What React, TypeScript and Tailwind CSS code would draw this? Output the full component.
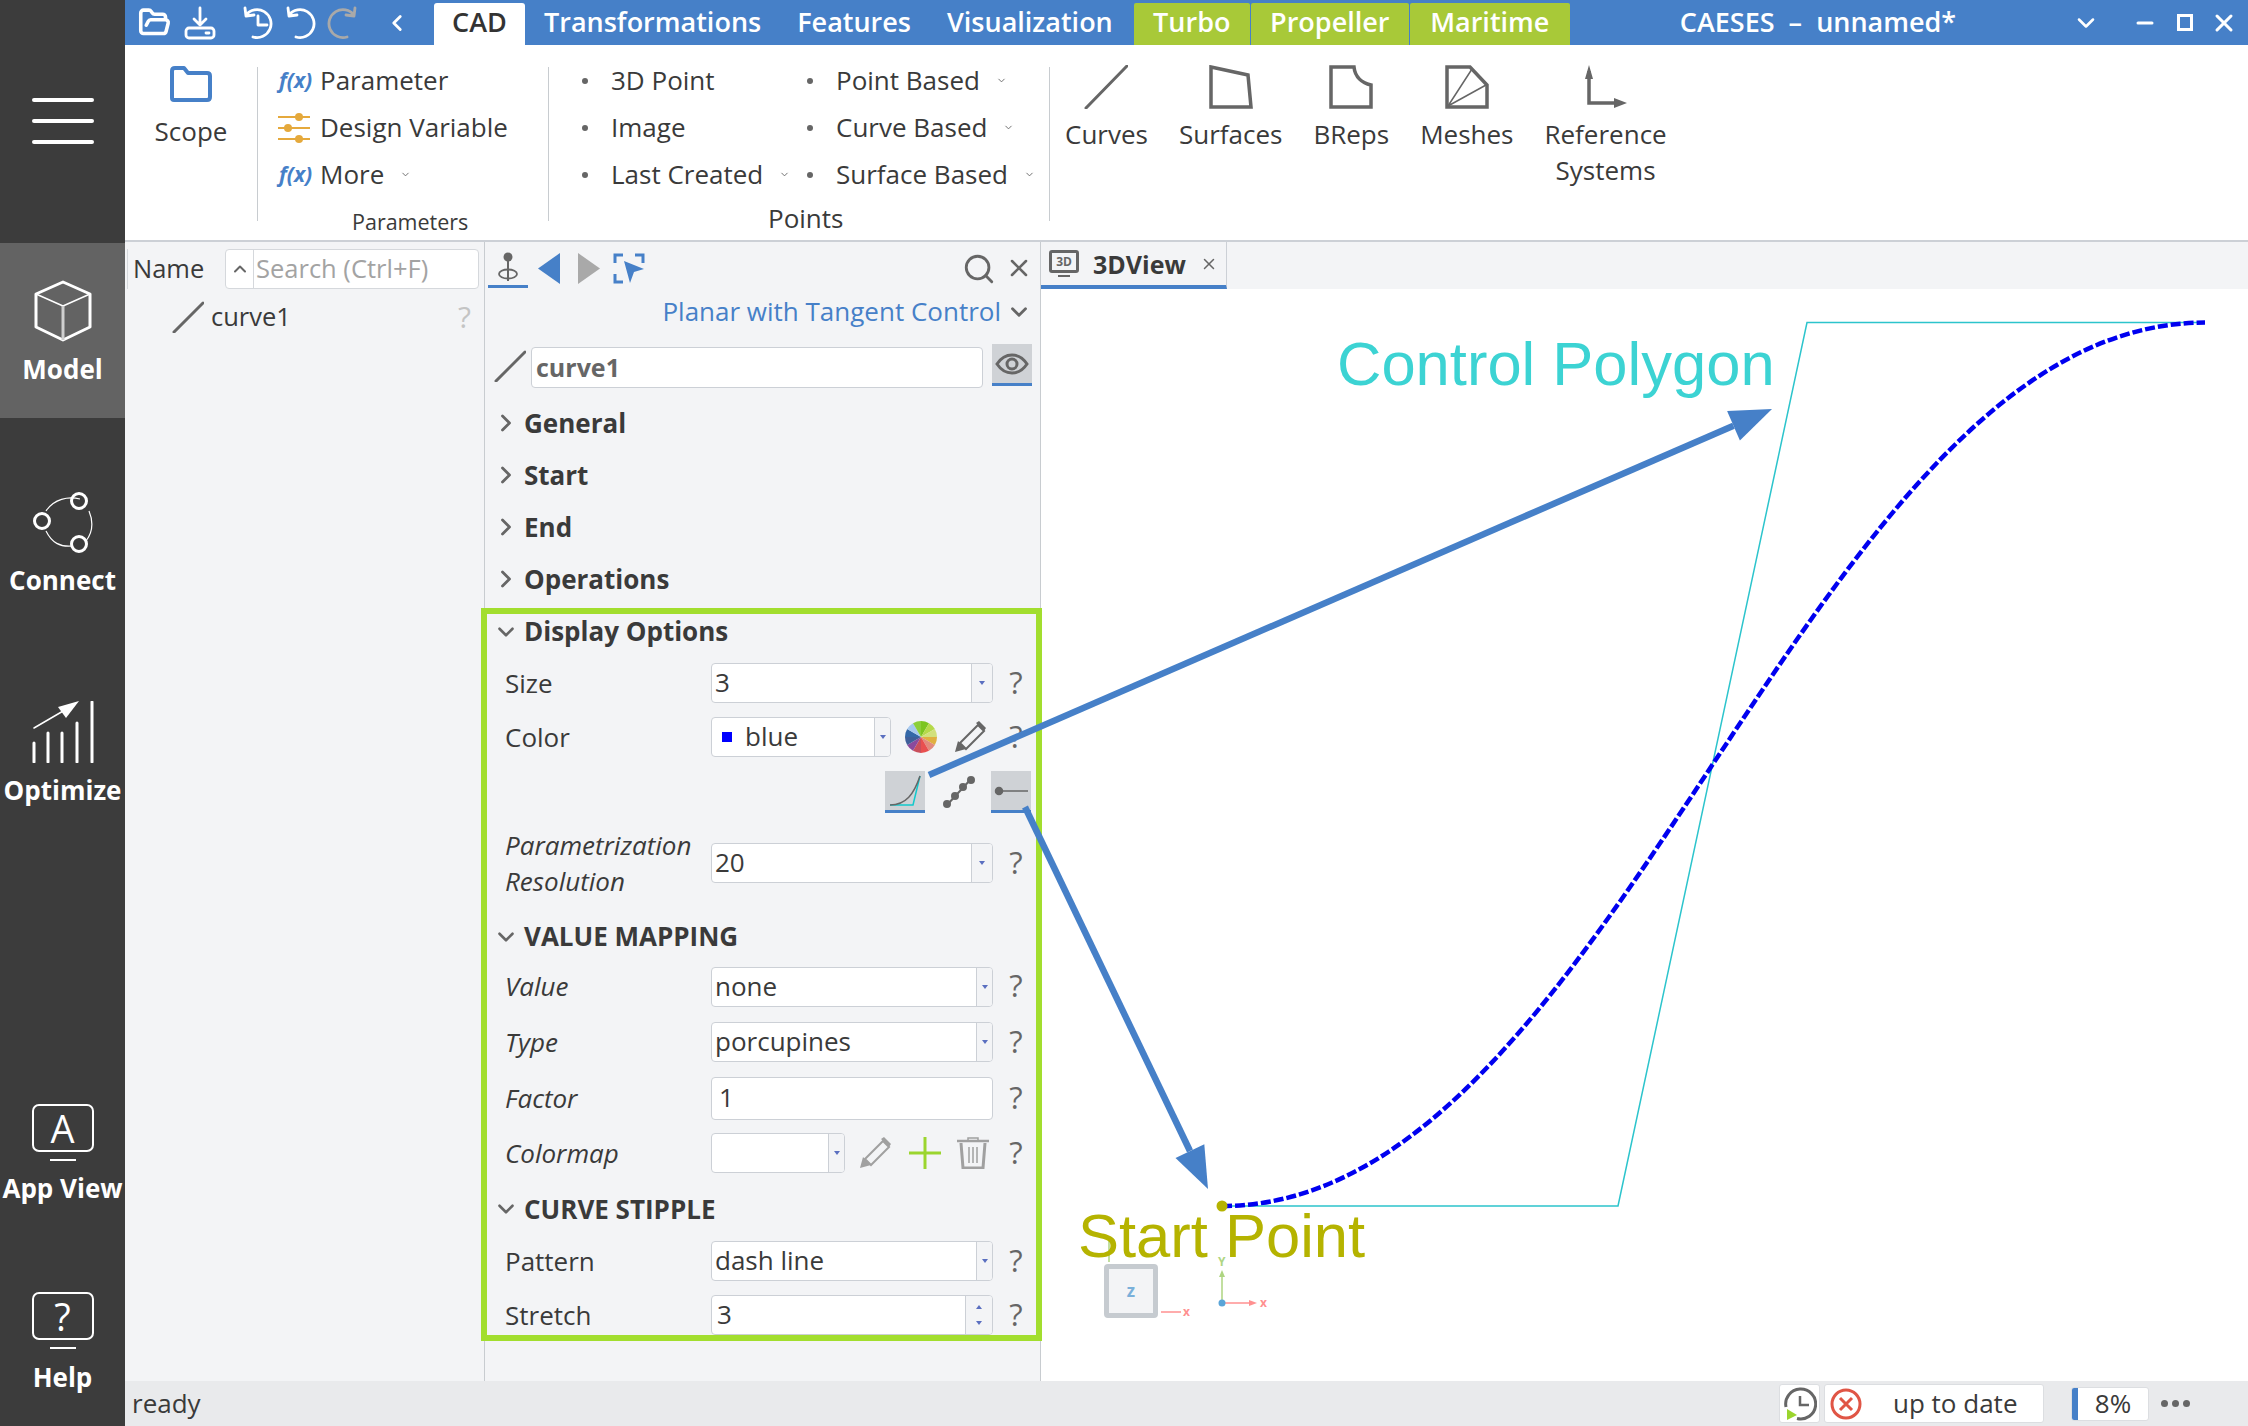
import type { ReactNode } from "react";
import { ChevronDown, ChevronRight, ChevronUp, ChevronLeft, FolderOpen, Minus, Search, X } from "lucide-react";

const BLUE = "#4680c8";
const GREY = "#666666";

function Cube() {
  return (
    <svg width="60" height="62" viewBox="0 0 60 62" fill="none" stroke="#fff" strokeWidth="3" strokeLinejoin="round">
      <path d="M30 2 57 14V47L30 60 3 47V14Z" />
      <path d="M3 14 30 26 57 14" strokeWidth="1.5" />
      <path d="M30 26V60" stroke="#cfcfcf" />
    </svg>
  );
}

function ConnectIcon() {
  return (
    <svg width="62" height="62" viewBox="0 0 62 62" fill="none" stroke="#fff">
      <path d="M14 20C22 8 36 5 48 8M57 20C62 32 60 42 54 50M40 55C28 56 20 52 14 40" strokeWidth="1.2" />
      <circle cx="47" cy="10" r="7.5" strokeWidth="3" />
      <circle cx="10" cy="30" r="7.5" strokeWidth="3" />
      <circle cx="47" cy="53" r="7.5" strokeWidth="3" />
    </svg>
  );
}

function OptimizeIcon() {
  return (
    <svg width="62" height="62" viewBox="0 0 62 62" fill="none" stroke="#fff" strokeLinecap="round">
      <path d="M2 27 38 6" strokeWidth="1.5" />
      <path d="M47 0 26 6 34 17Z" fill="#fff" stroke="none" />
      <path d="M2 42V61M16 32V61M30 32V61M45 22V61M60 1V61" strokeWidth="3" />
    </svg>
  );
}

function Monitor({ glyph }: { glyph: string }) {
  return (
    <div className="flex flex-col items-center">
      <div className="flex h-[48px] w-[62px] items-center justify-center rounded-[7px] border-[2.5px] border-white text-[38px] leading-none text-white">
        {glyph}
      </div>
      <div className="mt-[7px] h-[2px] w-[26px] bg-white" />
    </div>
  );
}

function NavItem({ icon, label, className, labelClass }: { icon: ReactNode; label: string; className: string; labelClass: string }) {
  return (
    <div className={`flex flex-col items-center ${className}`}>
      {icon}
      <span className={`text-[26px] leading-[32px] font-bold whitespace-nowrap text-white ${labelClass}`}>{label}</span>
    </div>
  );
}

function Sidebar() {
  return (
    <aside className="flex w-[125px] shrink-0 flex-col bg-[#3c3c3c]">
      <div className="flex h-[243px] flex-col items-center gap-[17px] pt-[98px]">
        <div className="h-[4px] w-[62px] rounded-sm bg-white" />
        <div className="h-[4px] w-[62px] rounded-sm bg-white" />
        <div className="h-[4px] w-[62px] rounded-sm bg-white" />
      </div>
      <NavItem icon={<Cube />} label="Model" className="h-[175px] bg-[#636363] pt-[37px]" labelClass="mt-[11px]" />
      <NavItem icon={<ConnectIcon />} label="Connect" className="pt-[73px]" labelClass="mt-[11px]" />
      <NavItem icon={<OptimizeIcon />} label="Optimize" className="pt-[105px]" labelClass="mt-[11px]" />
      <NavItem icon={<Monitor glyph="A" />} label="App View" className="pt-[298px]" labelClass="mt-[11px]" />
      <NavItem icon={<Monitor glyph="?" />} label="Help" className="pt-[88px]" labelClass="mt-[12px]" />
    </aside>
  );
}

function TitleBar() {
  return (
    <header className="flex h-[45px] shrink-0 items-end bg-[#4680c8] text-white">
      <div className="flex h-[45px] w-[309px] shrink-0 items-center gap-[13px] pl-[13px]">
        <FolderOpen size={33} strokeWidth={2.6} />
        <svg width="32" height="34" viewBox="0 0 32 34" fill="none" stroke="#fff" strokeWidth="2.8" strokeLinecap="round" strokeLinejoin="round">
          <path d="M16 2V18M10 13l6 6 6-6" />
          <rect x="2" y="22" width="28" height="10" rx="3" />
          <path d="M22 27h3" />
        </svg>
        <svg className="ml-[12px]" width="32" height="34" viewBox="0 0 32 34" fill="none" stroke="#fff" strokeWidth="2.8" strokeLinecap="round" strokeLinejoin="round">
          <path d="M5 9A14 14 0 1 1 12 31M4 2 5 10 13 9M17 10V19H26" />
        </svg>
        <svg className="ml-[-2px]" width="32" height="34" viewBox="0 0 32 34" fill="none" stroke="#fff" strokeWidth="2.8" strokeLinecap="round" strokeLinejoin="round">
          <path d="M5 9A14 14 0 1 1 12 31M4 2 5 10 13 9" />
        </svg>
        <svg className="ml-[-2px]" width="32" height="34" viewBox="0 0 32 34" fill="none" stroke="#a9a9a9" strokeWidth="2.8" strokeLinecap="round" strokeLinejoin="round">
          <path d="M27 9A14 14 0 1 0 20 31M28 2 27 10 19 9" />
        </svg>
        <ChevronLeft className="ml-[12px]" size={26} strokeWidth={2.6} />
      </div>
      <div className="flex h-[42px] w-[91px] items-center justify-center rounded-t-[3px] bg-white pb-[3px] text-[27px] font-semibold text-[#333]">CAD</div>
      <div className="w-[1px]" />
      {["Transformations", "Features", "Visualization"].map((t) => (
        <div key={t} className="flex h-[45px] items-center px-[18px] text-[27px] font-semibold whitespace-nowrap">{t}</div>
      ))}
      <div className="ml-[3px] flex gap-[1px]">
        {[["Turbo", "w-[116px]"], ["Propeller", "w-[158px]"], ["Maritime", "w-[160px]"]].map(([t, w]) => (
          <div key={t} className={`flex h-[42px] items-center justify-center rounded-t-[2px] bg-[#a8c938] pb-[3px] text-[27px] font-semibold ${w}`}>{t}</div>
        ))}
      </div>
      <div className="ml-[110px] flex h-[45px] items-center text-[27px] font-semibold whitespace-pre">CAESES  –  unnamed*</div>
      <div className="ml-auto flex h-[45px] items-center gap-[20px] pr-[10px]">
        <ChevronDown size={28} strokeWidth={2.2} />
        <Minus className="ml-[13px]" size={24} strokeWidth={3} />
        <div className="h-[17px] w-[16px] border-[3px] border-white" />
        <X className="ml-[-3px]" size={28} strokeWidth={2.6} />
      </div>
    </header>
  );
}

function Fx() {
  return <span className="w-[42px] shrink-0 pl-[1px] text-[21px] font-bold text-[#4680c8] italic">f(x)</span>;
}

function TinyChevron() {
  return <ChevronDown className="text-[#666]" size={11} strokeWidth={2} />;
}

function RibbonRow({ children, className = "" }: { children: ReactNode; className?: string }) {
  return <div className={`flex h-[47px] items-center text-[26px] whitespace-nowrap text-[#3a3a3a] ${className}`}>{children}</div>;
}

function PointRow({ label, more }: { label: string; more?: boolean }) {
  return (
    <RibbonRow>
      <span className="mr-[23px] h-[6px] w-[6px] rounded-full bg-[#666]" />
      {label}
      {more && <span className="ml-[16px]"><TinyChevron /></span>}
    </RibbonRow>
  );
}

function Separator() {
  return <div className="mt-[22px] h-[154px] w-[1px] shrink-0 bg-[#c8ccd0]" />;
}

function RibbonTool({ label, icon }: { label: ReactNode; icon: ReactNode }) {
  return (
    <div className="flex flex-col items-center text-center text-[26px] leading-[36px] whitespace-nowrap text-[#3a3a3a]">
      <div className="flex h-[44px] items-center justify-center">{icon}</div>
      <div className="mt-[7px]">{label}</div>
    </div>
  );
}

function Ribbon() {
  return (
    <section className="flex h-[197px] shrink-0 border-b-2 border-[#ccd0d6] bg-white">
      <div className="flex w-[132px] shrink-0 flex-col items-center pt-[21px]">
        <svg width="44" height="36" viewBox="0 0 44 36" fill="none" stroke={BLUE} strokeWidth="4" strokeLinejoin="round">
          <path d="M3 32V5Q3 2 6 2H15L19 7H38Q41 7 41 10V31Q41 34 38 34H5Q3 34 3 32Z" />
        </svg>
        <span className="mt-[10px] text-[26px] text-[#3a3a3a]">Scope</span>
      </div>
      <Separator />
      <div className="w-[290px] shrink-0 pt-[12px] pl-[20px]">
        <RibbonRow><Fx />Parameter</RibbonRow>
        <RibbonRow>
          <svg className="mr-[10px] shrink-0" width="32" height="32" viewBox="0 0 32 32" stroke="#e5a93c" fill="#e5a93c">
            <path d="M0 5H32M0 16H32M0 27H32" strokeWidth="2" />
            <circle cx="21" cy="5" r="4" stroke="none" />
            <circle cx="10" cy="16" r="4" stroke="none" />
            <circle cx="21" cy="27" r="4" stroke="none" />
          </svg>
          Design Variable
        </RibbonRow>
        <RibbonRow><Fx />More<span className="ml-[16px]"><TinyChevron /></span></RibbonRow>
        <div className="mt-[8px] pl-[74px] text-[21.5px] text-[#3a3a3a]">Parameters</div>
      </div>
      <Separator />
      <div className="w-[500px] shrink-0 pt-[12px] pl-[33px]">
        <div className="flex">
          <div className="w-[225px]">
            <PointRow label="3D Point" />
            <PointRow label="Image" />
            <PointRow label="Last Created" more />
          </div>
          <div>
            <PointRow label="Point Based" more />
            <PointRow label="Curve Based" more />
            <PointRow label="Surface Based" more />
          </div>
        </div>
        <div className="pl-[186px] text-[26px] leading-[40px] text-[#3a3a3a]">Points</div>
      </div>
      <Separator />
      <div className="flex items-start gap-[31px] pt-[20px] pl-[15px]">
        <RibbonTool
          label="Curves"
          icon={<svg width="44" height="44" viewBox="0 0 44 44" stroke={GREY} strokeWidth="3" strokeLinecap="round"><path d="M43 1 2 43" /></svg>}
        />
        <RibbonTool
          label="Surfaces"
          icon={<svg width="44" height="44" viewBox="0 0 44 44" fill="none" stroke={GREY} strokeWidth="3.5"><path d="M2 2 39 10 42 42H2Z" /></svg>}
        />
        <RibbonTool
          label="BReps"
          icon={<svg width="44" height="44" viewBox="0 0 44 44" fill="none" stroke={GREY} strokeWidth="3.5"><path d="M2 2H25C26 12 33 18 42 20V42H2Z" /></svg>}
        />
        <RibbonTool
          label="Meshes"
          icon={
            <svg width="44" height="44" viewBox="0 0 44 44" fill="none" stroke={GREY} strokeWidth="3.5">
              <path d="M2 2H25L42 20V42H2Z" />
              <path d="M3 41 27 4M3 41 41 20" strokeWidth="1.5" />
            </svg>
          }
        />
        <RibbonTool
          label={<>Reference<br />Systems</>}
          icon={
            <svg width="44" height="44" viewBox="0 0 44 44" fill={GREY} stroke={GREY}>
              <path d="M5 6V38H36" fill="none" strokeWidth="3.5" />
              <path d="M5 0 9 14H1ZM43 38 30 43V33Z" stroke="none" />
            </svg>
          }
        />
      </div>
    </section>
  );
}

function Tree() {
  return (
    <div className="w-[359px] shrink-0 pt-[7px] text-[25.5px] text-[#3a3a3a]">
      <div className="flex h-[40px] items-center">
        <div className="mx-[2px] h-[40px] w-[1px] bg-[#d5d8dc]" />
        <span className="ml-[3px] w-[92px] pb-[2px]">Name</span>
        <div className="flex h-[40px] w-[254px] items-center rounded-[4px] border border-[#d5d8dc] bg-white">
          <div className="flex h-full w-[28px] shrink-0 items-center justify-center border-r border-[#d5d8dc]">
            <ChevronUp size={20} strokeWidth={2.4} color={GREY} />
          </div>
          <span className="pb-[2px] pl-[2px] whitespace-nowrap text-[#a3a3a3]">Search (Ctrl+F)</span>
        </div>
      </div>
      <div className="mt-[8px] flex h-[40px] items-center pl-[47px]">
        <svg className="shrink-0" width="32" height="32" viewBox="0 0 32 32" stroke={GREY} strokeWidth="3" strokeLinecap="round"><path d="M2 31 31 2" /></svg>
        <span className="ml-[7px] pb-[2px]">curve1</span>
        <span className="ml-[167px] text-[30px] leading-none text-[#c4c4c4]">?</span>
      </div>
    </div>
  );
}

function Section({ label, open, h }: { label: string; open?: boolean; h: string }) {
  return (
    <div className={`flex items-center pl-[8px] text-[26px] font-bold text-[#3a3a3a] ${h}`}>
      {open ? <ChevronDown size={26} strokeWidth={2.4} color={GREY} /> : <ChevronRight className="ml-[-1px]" size={28} strokeWidth={2.4} color={GREY} />}
      <span className={open ? "ml-[5px]" : "ml-[4px]"}>{label}</span>
    </div>
  );
}

function Help() {
  return <span className="ml-auto w-[46px] shrink-0 pr-[2px] pb-[2px] text-center text-[31px] leading-none text-[#666]">?</span>;
}

function Caret({ up }: { up?: boolean }) {
  return <span className={`h-0 w-0 border-x-[3px] border-x-transparent ${up ? "border-b-[4px] border-b-[#5a6fc0]" : "border-t-[4px] border-t-[#5a6fc0]"}`} />;
}

function Field({ value, w, cell, spin, h = "h-[40px]" }: { value: ReactNode; w: string; cell?: string; spin?: boolean; h?: string }) {
  return (
    <div className={`flex shrink-0 items-center overflow-hidden rounded-[4px] border border-[#ccd0d6] bg-white ${w} ${h}`}>
      <div className="flex min-w-0 flex-1 items-center pb-[2px] pl-[3px] whitespace-nowrap">{value}</div>
      {cell && (
        <div className={`flex h-full shrink-0 flex-col items-center border-l border-[#ccd0d6] bg-[#f3f4f6] ${cell} ${spin ? "justify-between py-[9px]" : "justify-center"}`}>
          {spin && <Caret up />}
          <Caret />
        </div>
      )}
    </div>
  );
}

function Row({ label, italic, h, children }: { label?: ReactNode; italic?: boolean; h: string; children: ReactNode }) {
  return (
    <div className={`flex items-center text-[26px] leading-[36px] text-[#3a3a3a] ${h}`}>
      <div className={`w-[226px] shrink-0 pb-[1px] pl-[20px] ${italic ? "italic" : ""}`}>{label}</div>
      {children}
    </div>
  );
}

function ToggleBtn({ children }: { children: ReactNode }) {
  return <div className="flex h-[42px] w-[40px] shrink-0 items-center justify-center border-b-[3px] border-[#4680c8] bg-[#cfd2d6]">{children}</div>;
}

function ColorWheel() {
  const colors = ["#7cc520", "#b5d94a", "#d2e07c", "#e0b040", "#e28a7c", "#e85050", "#c94f5c", "#8a4a9c", "#3f5f9a", "#3468a8", "#a6c8ee", "#8ccf3a"];
  const wedge = (i: number) => {
    const a = ((i * 30 - 90) * Math.PI) / 180;
    const b = (((i + 1) * 30 - 90) * Math.PI) / 180;
    return `M16 16L${16 + 16 * Math.cos(a)} ${16 + 16 * Math.sin(a)}A16 16 0 0 1 ${16 + 16 * Math.cos(b)} ${16 + 16 * Math.sin(b)}Z`;
  };
  return (
    <svg width="32" height="32" viewBox="0 0 32 32">
      {colors.map((c, i) => <path key={c + i} d={wedge(i)} fill={c} />)}
    </svg>
  );
}

function PencilIcon({ color, className }: { color: string; className: string }) {
  return (
    <svg className={className} width="32" height="32" viewBox="0 0 32 32" fill="none" stroke={color} strokeWidth="2">
      <path d="M6 22 24 4 30 10 12 28Z" />
      <path d="M1 31 4 20 12 28Z" fill={color} stroke="none" />
      <path d="M22 2 25 0 32 7 30 10Z" fill={color} stroke="none" />
    </svg>
  );
}

function Properties() {
  return (
    <div className="flex w-[557px] shrink-0 flex-col border-x border-[#c8ccd0]">
      <div className="flex h-[50px] items-start pt-[7px] pl-[3px]">
        <div className="flex h-[39px] w-[40px] items-center justify-center border-b-[3px] border-[#4680c8]">
          <svg width="26" height="30" viewBox="0 0 26 30" fill="none" stroke={GREY} strokeWidth="1.8">
            <circle cx="13" cy="5" r="4.5" fill={GREY} stroke="none" />
            <path d="M13 8V29" strokeWidth="2" />
            <ellipse cx="13" cy="22" rx="9" ry="4.5" />
          </svg>
        </div>
        <svg className="mt-[4px] ml-[10px]" width="22" height="31" viewBox="0 0 22 31"><path d="M22 0V31L0 15.5Z" fill={BLUE} /></svg>
        <svg className="mt-[4px] ml-[18px]" width="22" height="31" viewBox="0 0 22 31"><path d="M0 0V31L22 15.5Z" fill="#a9a9a9" /></svg>
        <svg className="mt-[4px] ml-[13px]" width="32" height="31" viewBox="0 0 32 31" fill="none" stroke={BLUE} strokeWidth="3">
          <path d="M10 2H2V10M22 2H30V10M2 21V29H10" />
          <path d="M11 8 31 16 21 19 17 30Z" fill={BLUE} stroke="none" />
        </svg>
        <Search className="mt-[3px] ml-auto" size={34} strokeWidth={2} color={GREY} />
        <X className="mt-[5px] mr-[7px] ml-[9px]" size={28} strokeWidth={2.2} color={GREY} />
      </div>
      <div className="flex h-[40px] items-center justify-end pr-[8px] text-[26px] text-[#4680c8]">
        <span className="pb-[2px]">Planar with Tangent Control</span>
        <ChevronDown className="ml-[5px]" size={26} strokeWidth={2.6} color={GREY} />
      </div>
      <div className="flex h-[65px] items-start pt-[12px] pl-[9px]">
        <svg className="mt-[6px] shrink-0" width="32" height="32" viewBox="0 0 32 32" stroke={GREY} strokeWidth="3" strokeLinecap="round"><path d="M2 31 31 2" /></svg>
        <div className="mt-[3px] ml-[5px] flex h-[41px] w-[452px] items-center rounded-[4px] border border-[#ccd0d6] bg-white pl-[4px] text-[25px] font-bold text-[#666]">curve1</div>
        <div className="ml-[9px]">
          <ToggleBtn>
            <svg width="34" height="22" viewBox="0 0 34 22" fill="none" stroke={GREY} strokeWidth="3">
              <path d="M2 11C10 -1 24 -1 32 11 24 23 10 23 2 11Z" />
              <circle cx="17" cy="11" r="5" />
            </svg>
          </ToggleBtn>
        </div>
      </div>
      <Section label="General" h="h-[52px]" />
      <Section label="Start" h="h-[52px]" />
      <Section label="End" h="h-[52px]" />
      <Section label="Operations" h="h-[52px]" />
      <Section label="Display Options" open h="h-[53px]" />
      <Row label="Size" h="h-[50px]">
        <Field value="3" w="w-[282px]" cell="w-[21px]" />
        <Help />
      </Row>
      <Row label="Color" h="h-[58px]">
        <Field
          value={<><span className="mt-[2px] mr-[13px] ml-[7px] h-[10px] w-[10px] bg-[#0000ff]" />blue</>}
          w="w-[180px]"
          cell="w-[16px]"
        />
        <div className="ml-[14px]"><ColorWheel /></div>
        <PencilIcon className="ml-[17px]" color={GREY} />
        <Help />
      </Row>
      <Row h="h-[52px]">
        <div className="flex w-[320px] items-center">
          <div className="ml-[174px]">
            <ToggleBtn>
              <svg width="34" height="34" viewBox="0 0 34 34" fill="none" strokeWidth="1.5">
                <path d="M2 31H25L32 2" stroke="#12c9cc" />
                <path d="M2 31C18 31 26 20 32 2" stroke={GREY} />
              </svg>
            </ToggleBtn>
          </div>
          <svg className="ml-[18px]" width="32" height="34" viewBox="0 0 32 34" fill={GREY} stroke={GREY} strokeWidth="2">
            <path d="M4 30 28 4" />
            <circle cx="4" cy="29" r="3" />
            <circle cx="12" cy="21" r="3" />
            <circle cx="20" cy="12" r="3" />
            <circle cx="28" cy="5" r="3" />
          </svg>
          <div className="ml-[16px]">
            <ToggleBtn>
              <svg width="36" height="14" viewBox="0 0 36 14" fill={GREY} stroke={GREY} strokeWidth="1.5">
                <path d="M6 7H35" />
                <circle cx="6" cy="7" r="3.5" />
              </svg>
            </ToggleBtn>
          </div>
        </div>
      </Row>
      <Row label={<>Parametrization<br />Resolution</>} italic h="h-[90px]">
        <Field value="20" w="w-[282px]" cell="w-[21px]" />
        <Help />
      </Row>
      <Section label="VALUE MAPPING" open h="h-[57px]" />
      <Row label="Value" italic h="h-[43px]">
        <Field value="none" w="w-[282px]" cell="w-[16px]" />
        <Help />
      </Row>
      <Row label="Type" italic h="h-[68px]">
        <Field value="porcupines" w="w-[282px]" cell="w-[16px]" />
        <Help />
      </Row>
      <Row label="Factor" italic h="h-[44px]">
        <Field value={<span className="pl-[4px]">1</span>} w="w-[282px]" h="h-[43px]" />
        <Help />
      </Row>
      <Row label="Colormap" italic h="h-[66px]">
        <Field value="" w="w-[134px]" cell="w-[16px]" />
        <PencilIcon className="ml-[14px]" color="#a0a0a0" />
        <svg className="ml-[18px]" width="32" height="32" viewBox="0 0 32 32" stroke="#9bd52e" strokeWidth="3"><path d="M0 16H32M16 0V32" /></svg>
        <svg className="ml-[16px]" width="32" height="32" viewBox="0 0 32 32" fill="none" stroke="#a0a0a0">
          <path d="M0 4H32" strokeWidth="2.5" />
          <path d="M11 3V1H21V3" strokeWidth="1.5" />
          <path d="M4 6 6 31H26L28 6" strokeWidth="3" />
          <path d="M12 10V26M16 10V26M20 10V26" strokeWidth="1.5" />
        </svg>
        <Help />
      </Row>
      <Section label="CURVE STIPPLE" open h="h-[46px]" />
      <Row label="Pattern" h="h-[58px]">
        <Field value="dash line" w="w-[282px]" cell="w-[16px]" />
        <Help />
      </Row>
      <Row label="Stretch" h="h-[50px]">
        <Field value={<span className="pl-[2px]">3</span>} w="w-[282px]" cell="w-[27px]" spin />
        <Help />
      </Row>
    </div>
  );
}

function Viewport() {
  return (
    <div className="flex min-w-0 flex-1 flex-col">
      <div className="flex h-[47px] shrink-0">
        <div className="flex h-[47px] w-[186px] items-center border-r border-b-4 border-r-[#ccd0d6] border-b-[#4680c8] pl-[8px] text-[25px] font-bold text-[#3a3a3a]">
          <div className="flex flex-col items-center">
            <div className="flex h-[23px] w-[30px] items-center justify-center rounded-[3px] border-[3px] border-[#666] text-[12px] font-bold text-[#666]">3D</div>
            <div className="mt-[2px] h-[2px] w-[12px] bg-[#666]" />
          </div>
          <span className="ml-[14px] pt-[2px]">3DView</span>
          <X className="ml-[14px]" size={18} strokeWidth={2} color={GREY} />
        </div>
      </div>
      <div className="relative flex-1 overflow-hidden bg-white">
        <svg className="absolute inset-0" width="1208" height="1092" viewBox="1040 289 1208 1092" fill="none">
          <path d="M1221 1206H1617L1806 322.6H2204" stroke="#2cc4cc" strokeWidth="1.5" />
          <path d="M1221 1206C1617 1206 1806 322.6 2204 322.6" stroke="#0000f0" strokeWidth="4.5" strokeDasharray="10 3" />
          <circle cx="1221" cy="1206" r="5.5" fill="#b5b300" />
          <path d="M1221 1303V1276" stroke="#aed581" strokeWidth="1.5" />
          <path d="M1221 1303H1250" stroke="#ff9090" strokeWidth="1.5" />
          <path d="M1221 1270 1224 1277H1218Z" fill="#aed581" />
          <path d="M1256 1303 1248 1300V1306Z" fill="#ff9090" />
          <circle cx="1221" cy="1303" r="3.5" fill="#5aa5d8" />
          <path d="M1160 1312H1180" stroke="#ff9090" strokeWidth="1.5" />
          <path d="M1108 1240V1262" stroke="#aed581" strokeWidth="1.5" />
        </svg>
        <span className="absolute top-[40px] left-[296px] font-['Liberation_Sans',sans-serif] text-[61.5px] leading-[70px] whitespace-nowrap text-[#3cd3d3]">Control Polygon</span>
        <span className="absolute top-[912px] left-[37px] font-['Liberation_Sans',sans-serif] text-[61.5px] leading-[70px] whitespace-nowrap text-[#b5b300]">Start Point</span>
        <div className="absolute top-[975px] left-[63px] flex h-[54px] w-[54px] items-center justify-center rounded-[4px] border-[5px] border-[#c6cbd0] bg-[#f3f4f6] text-[17px] font-bold text-[#7ab0da]">z</div>
        <span className="absolute top-[1016px] left-[142px] text-[12px] leading-[14px] font-bold text-[#ff9090]">x</span>
        <span className="absolute top-[1007px] left-[219px] text-[12px] leading-[14px] font-bold text-[#ff9090]">x</span>
        <span className="absolute top-[966px] left-[177px] text-[12px] leading-[14px] font-bold text-[#aed581]">Y</span>
      </div>
    </div>
  );
}

function StatusBar() {
  return (
    <footer className="relative flex h-[45px] shrink-0 items-center bg-[#e9eaec] pl-[7px] text-[26px] text-[#3a3a3a]">
      <span>ready</span>
      <div className="ml-auto flex items-center pr-[58px]">
        <div className="flex h-[39px] w-[41px] items-center justify-center rounded-[3px] border border-[#dcdee1] bg-white">
          <svg width="34" height="34" viewBox="0 0 34 34" fill="none" stroke={GREY} strokeWidth="3">
            <path d="M3 20A15 15 0 1 1 14 31.5" />
            <path d="M17 9V18H26" strokeWidth="2.5" />
            <path d="M4 22 14 28 4 33Z" fill="#9bd52e" stroke="none" />
          </svg>
        </div>
        <div className="ml-[4px] flex h-[39px] w-[220px] items-center rounded-[3px] border border-[#dcdee1] bg-white pl-[5px]">
          <svg className="shrink-0" width="32" height="32" viewBox="0 0 32 32" fill="none" stroke="#e05545" strokeWidth="3">
            <circle cx="16" cy="16" r="14" />
            <path d="M10 10 22 22M22 10 10 22" />
          </svg>
          <span className="ml-[31px]">up to date</span>
        </div>
        <div className="ml-[27px] flex h-[34px] w-[78px] items-center overflow-hidden rounded-[3px] border border-[#dcdee1] bg-white">
          <div className="h-full w-[6px] bg-[#4680c8]" />
          <span className="flex-1 text-center">8%</span>
        </div>
        <div className="ml-[12px] flex gap-[4px]">
          <span className="h-[7px] w-[7px] rounded-full bg-[#666]" />
          <span className="h-[7px] w-[7px] rounded-full bg-[#666]" />
          <span className="h-[7px] w-[7px] rounded-full bg-[#666]" />
        </div>
      </div>
    </footer>
  );
}

export default function App() {
  return (
    <div className="relative flex h-[1426px] w-[2248px] overflow-hidden bg-white font-['Open_Sans',sans-serif]">
      <Sidebar />
      <main className="flex min-w-0 flex-1 flex-col">
        <TitleBar />
        <Ribbon />
        <div className="flex min-h-0 flex-1 bg-[#f3f4f6]">
          <Tree />
          <Properties />
          <Viewport />
        </div>
        <StatusBar />
      </main>
      {/* annotation layer drawn on top of the app window */}
      <div className="pointer-events-none absolute top-[608px] left-[481px] h-[733px] w-[561px] border-[6px] border-[#a2de2e]" />
      <svg className="pointer-events-none absolute inset-0" width="2248" height="1426" viewBox="0 0 2248 1426" fill="none">
        <path d="M929 775 1733.5 425.7" stroke={BLUE} strokeWidth="6.5" />
        <path d="M1772 409 1739.9 440.4 1727.1 411Z" fill={BLUE} />
        <path d="M1025 807 1190 1151" stroke={BLUE} strokeWidth="6.5" />
        <path d="M1208 1189 1204.3 1144.2 1175.5 1158Z" fill={BLUE} />
      </svg>
    </div>
  );
}
